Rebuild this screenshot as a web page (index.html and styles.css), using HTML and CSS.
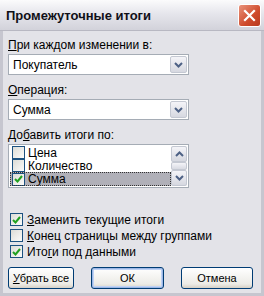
FILE: index.html
```html
<!DOCTYPE html>
<html lang="ru">
<head>
    <meta charset="UTF-8">
    <title>Промежуточные итоги</title>
    <link rel="stylesheet" href="styles.css">
</head>
<body>

<div class="window">
    <div class="titlebar">
        <span class="title">Промежуточные итоги</span>
        <div class="close">
            <svg width="13" height="13" viewBox="0 0 13 13">
                <path d="M2 2 L11 11 M11 2 L2 11" stroke="#fff" stroke-width="2.2" stroke-linecap="square"/>
            </svg>
        </div>
    </div>

    <div class="content">
        <div class="label lbl-first"><u>П</u>ри каждом изменении в:</div>
        <div class="combo">
            <span class="combo-text">Покупатель</span>
            <span class="drop"><svg width="9" height="6" viewBox="0 0 9 6"><path d="M1 1 L4.5 4.5 L8 1" stroke="#4d6185" stroke-width="2" fill="none"/></svg></span>
        </div>

        <div class="label"><u>О</u>перация:</div>
        <div class="combo">
            <span class="combo-text">Сумма</span>
            <span class="drop"><svg width="9" height="6" viewBox="0 0 9 6"><path d="M1 1 L4.5 4.5 L8 1" stroke="#4d6185" stroke-width="2" fill="none"/></svg></span>
        </div>

        <div class="label">До<u>б</u>авить итоги по:</div>
        <div class="listbox">
            <div class="items">
                <div class="item"><span class="box"></span><span>Цена</span></div>
                <div class="item"><span class="box"></span><span>Количество</span></div>
                <div class="item selected"><span class="box"><svg width="9" height="8" viewBox="0 0 9 8"><path d="M1 4 L3.5 6.5 L8 1" stroke="#21a121" stroke-width="2" fill="none"/></svg></span><span>Сумма</span></div>
            </div>
            <div class="scrollbar">
                <span class="sb-btn"><svg width="9" height="6" viewBox="0 0 9 6"><path d="M1 5 L4.5 1.5 L8 5" stroke="#4d6185" stroke-width="2" fill="none"/></svg></span>
                <span class="sb-thumb"></span>
                <span class="sb-btn"><svg width="9" height="6" viewBox="0 0 9 6"><path d="M1 1 L4.5 4.5 L8 1" stroke="#4d6185" stroke-width="2" fill="none"/></svg></span>
            </div>
        </div>

        <div class="options">
            <div class="check"><span class="box"><svg width="9" height="8" viewBox="0 0 9 8"><path d="M1 4 L3.5 6.5 L8 1" stroke="#21a121" stroke-width="2" fill="none"/></svg></span><span><u>З</u>аменить текущие итоги</span></div>
            <div class="check"><span class="box"></span><span><u>К</u>онец страницы между группами</span></div>
            <div class="check"><span class="box"><svg width="9" height="8" viewBox="0 0 9 8"><path d="M1 4 L3.5 6.5 L8 1" stroke="#21a121" stroke-width="2" fill="none"/></svg></span><span>Ито<u>г</u>и под данными</span></div>
        </div>

        <div class="buttons">
            <div class="btn btn-clear"><span><u>У</u>брать все</span></div>
            <div class="btn btn-ok">ОК</div>
            <div class="btn btn-cancel">Отмена</div>
        </div>
    </div>
</div>

</body>
</html>
```

FILE: styles.css
```css
body {
    margin: 0;
    padding: 0;
    font-family: "Liberation Sans", Arial, sans-serif;
    font-size: 12px;
    color: #000;
    background: #fff;
}

.window {
    width: 264px;
    height: 296px;
    box-sizing: border-box;
    background: #e3e3e8;
    border: 3px solid #c6c6cf;
    border-top: 0;
    display: flex;
    flex-direction: column;
}

.titlebar {
    height: 30px;
    margin: 0 -3px;
    padding: 0 3px 0 6px;
    display: flex;
    align-items: center;
    justify-content: space-between;
    background: linear-gradient(#fbfbfc, #e6e6ec 45%, #d2d2da);
    border-bottom: 1px solid #b8b8c2;
}

.title {
    font-weight: bold;
    font-size: 13px;
    color: #101018;
}

.close {
    width: 21px;
    height: 21px;
    border: 1px solid #fff;
    border-radius: 3px;
    background: linear-gradient(135deg, #e9937c, #cf4b2c 60%, #b83a1e);
    display: flex;
    align-items: center;
    justify-content: center;
}

.content {
    padding: 0 5px;
    flex: 1;
}

.label {
    height: 13px;
    line-height: 13px;
    margin: 9px 0 2px;
}

.lbl-first {
    margin-top: 8px;
}

.combo {
    width: 181px;
    height: 21px;
    box-sizing: border-box;
    border: 1px solid #a5acb5;
    background: #fff;
    display: flex;
    align-items: center;
    padding: 1px;
}

.combo-text {
    flex: 1;
    padding-left: 3px;
}

.drop, .sb-btn {
    width: 17px;
    height: 17px;
    box-sizing: border-box;
    border: 1px solid #c4c8d2;
    border-radius: 2px;
    background: linear-gradient(#f4f4f8, #d6d8e0);
    display: flex;
    align-items: center;
    justify-content: center;
}

.listbox {
    width: 181px;
    height: 44px;
    box-sizing: border-box;
    border: 1px solid #a5acb5;
    background: #fff;
    display: flex;
    padding: 1px;
}

.items {
    flex: 1;
    display: flex;
    flex-direction: column;
}

.item {
    height: 13px;
    display: flex;
    align-items: center;
    gap: 3px;
    padding-left: 2px;
}

.item.selected {
    background: #b0b0b8;
    outline: 1px dotted #333;
    outline-offset: -1px;
    height: 14px;
}

.box {
    width: 13px;
    height: 13px;
    box-sizing: border-box;
    border: 1px solid #1c5180;
    background: linear-gradient(135deg, #dcdcd6, #fbfbfa);
    display: inline-flex;
    align-items: center;
    justify-content: center;
}

.scrollbar {
    width: 16px;
    display: flex;
    flex-direction: column;
    justify-content: space-between;
    align-items: center;
    background: #f3f3f6;
}

.scrollbar .sb-btn {
    width: 16px;
}

.sb-thumb {
    width: 14px;
    height: 6px;
    border: 1px solid #c4c8d2;
    border-radius: 2px;
    background: linear-gradient(#f4f4f8, #d8dae2);
}

.options {
    margin-top: 25px;
    display: flex;
    flex-direction: column;
    gap: 3px;
}

.check {
    height: 13px;
    display: flex;
    align-items: center;
    gap: 4px;
    padding-left: 2px;
}

.buttons {
    margin-top: 9px;
    display: flex;
    justify-content: space-between;
    padding-right: 3px;
}

.btn {
    height: 22px;
    box-sizing: border-box;
    border: 1px solid #003c74;
    border-radius: 3px;
    background: linear-gradient(#ffffff, #ecebe6 80%, #d6d0c5);
    display: flex;
    align-items: center;
    justify-content: center;
    font-size: 11px;
}

.btn-clear {
    width: 66px;
}

.btn-ok {
    width: 73px;
    box-shadow: inset 0 0 0 1px #9cb7e6, inset 0 0 0 2px #c0d3f5;
}

.btn-cancel {
    width: 72px;
}
```
